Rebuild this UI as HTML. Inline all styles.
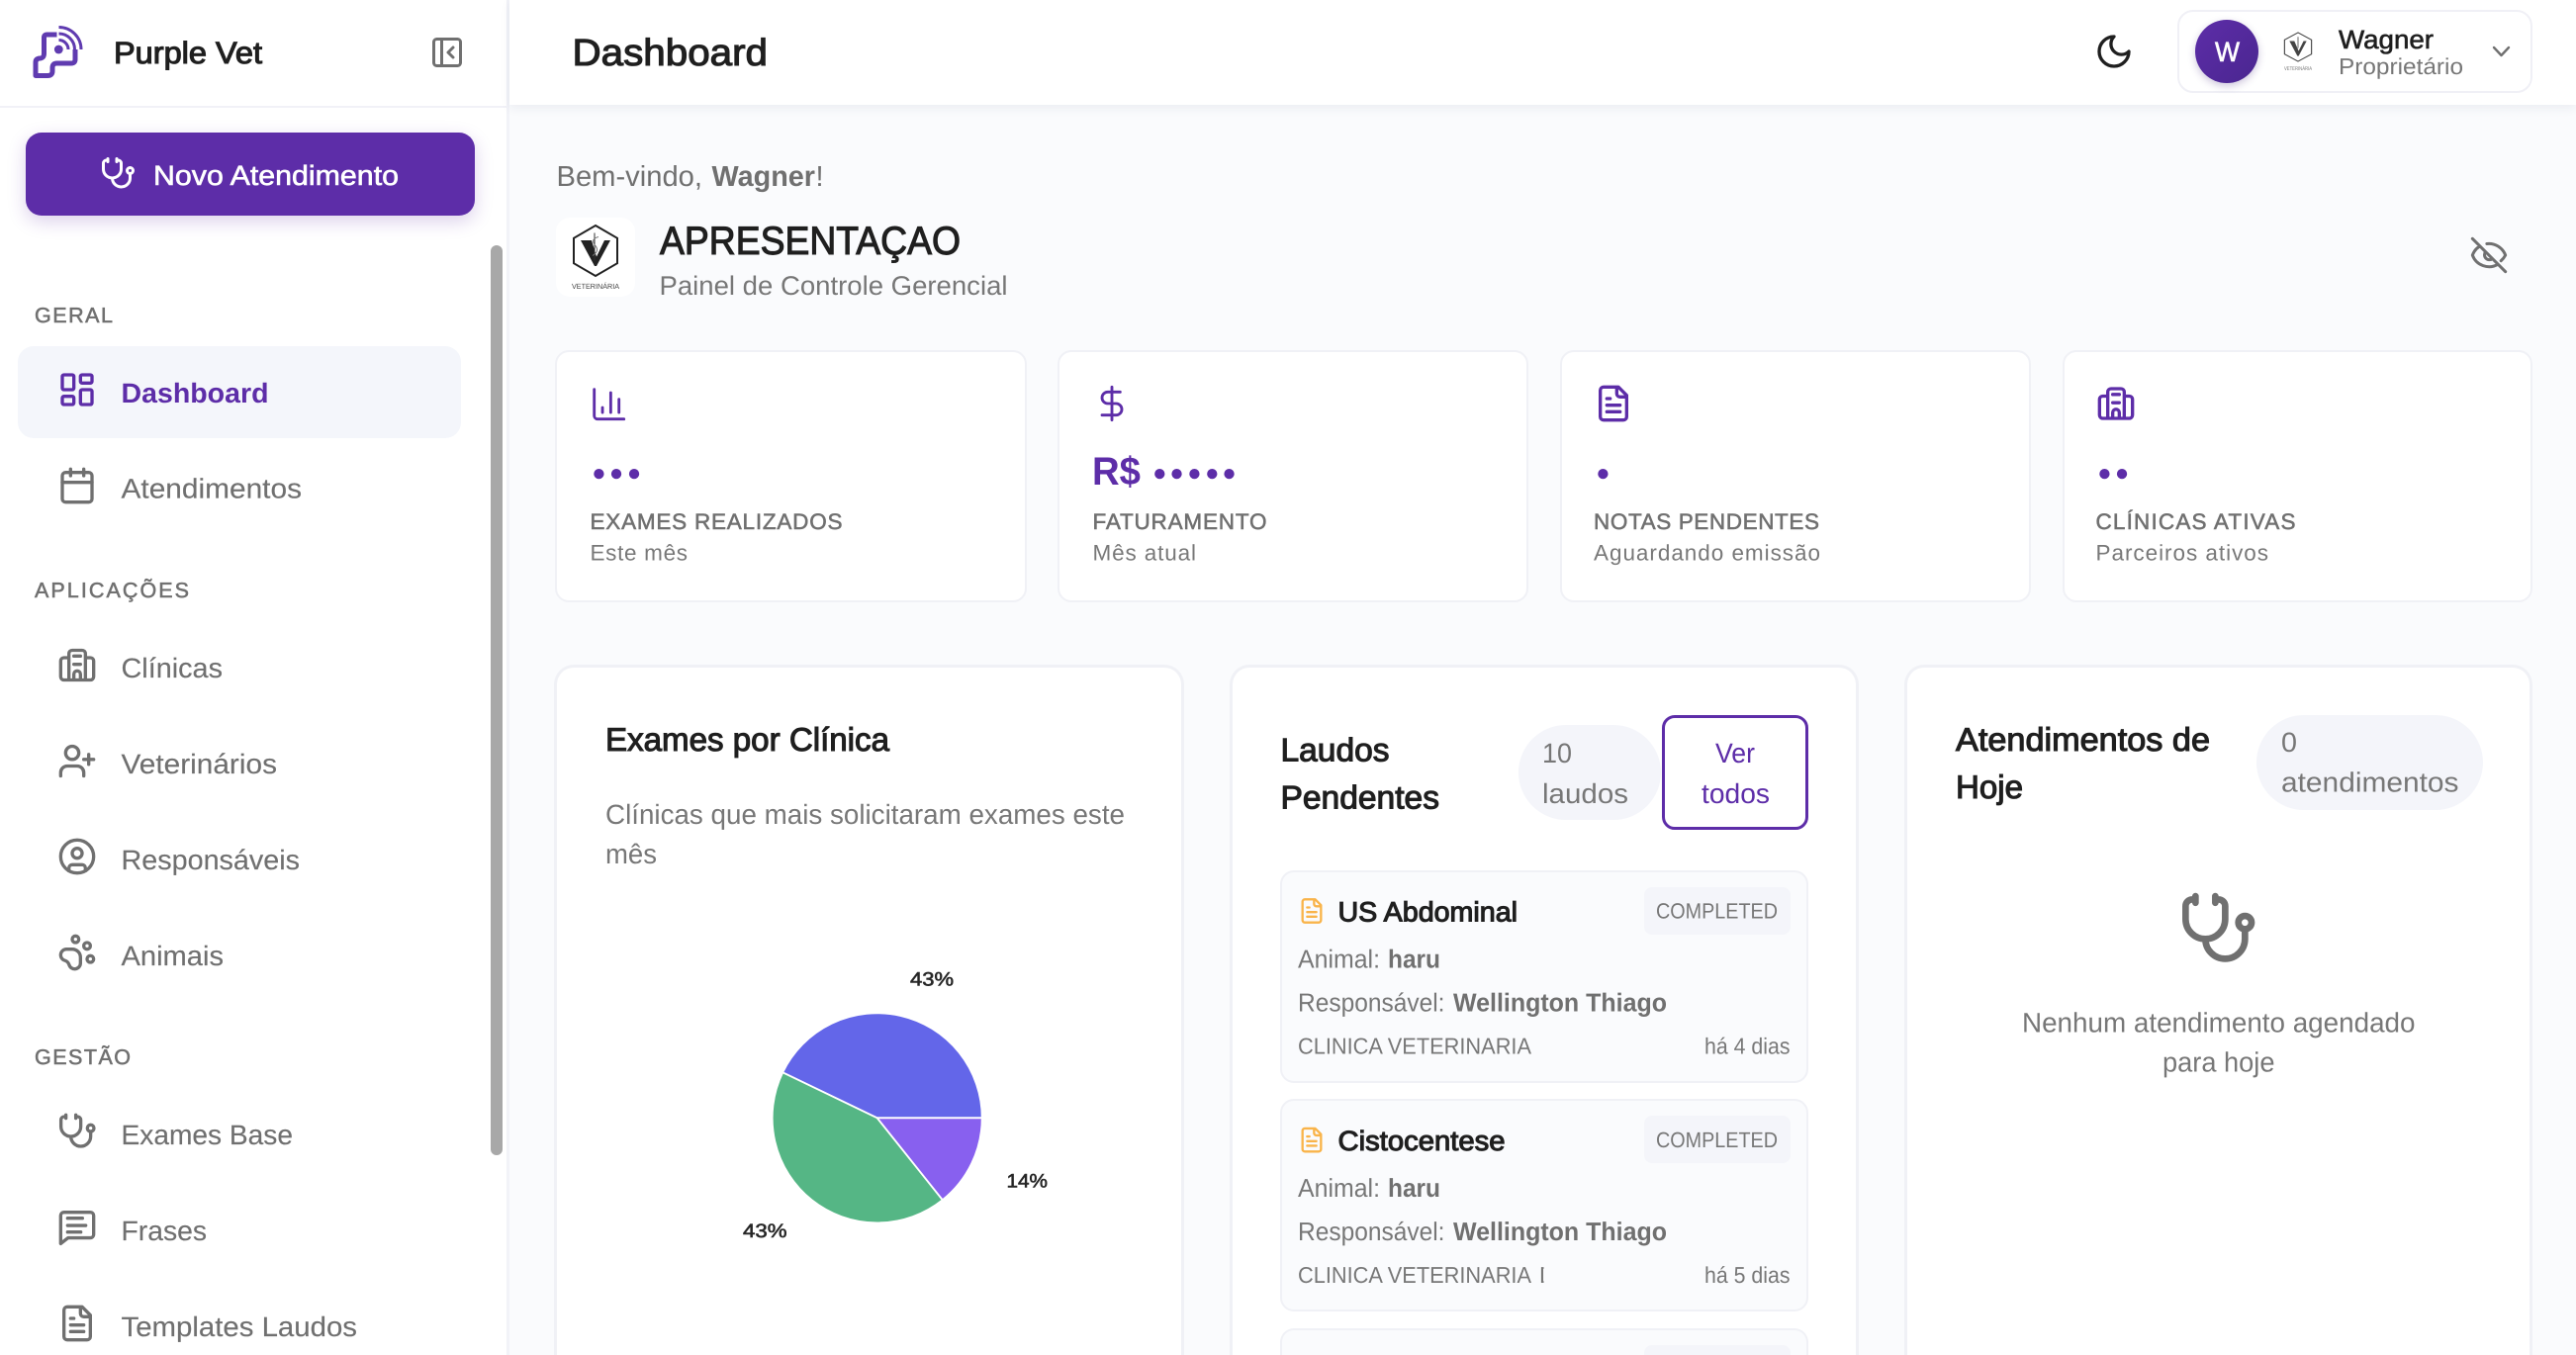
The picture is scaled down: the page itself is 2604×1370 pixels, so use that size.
<!DOCTYPE html>
<html lang="pt-BR">
<head>
<meta charset="utf-8">
<title>Purple Vet - Dashboard</title>
<style>
html,body{margin:0;padding:0;width:2604px;height:1370px;overflow:hidden;background:#fafbfd}
#root{position:relative;width:2604px;height:1370px;overflow:hidden;background:#fafbfd}
.a{position:absolute;box-sizing:border-box}
.side{left:0;top:0;width:512px;height:1370px;background:#fff}
.sideb{left:512px;top:0;width:3px;height:1370px;background:#f2f3f8}
.sline{left:0;top:107px;width:512px;height:2px;background:#f1f1f7}
.top{left:515px;top:0;width:2089px;height:106px;background:#fff;box-shadow:0 3px 10px rgba(30,40,80,.07)}
.btn{left:26px;top:134px;width:454px;height:84px;border-radius:16px;background:#5d2da8;box-shadow:0 6px 18px rgba(94,45,168,.22)}
.act{left:18px;top:350px;width:448px;height:93px;border-radius:16px;background:#f4f6fb}
.scr{left:496px;top:248px;width:12px;height:920px;border-radius:6px;background:#a8a8a8}
.ubox{left:2201px;top:10px;width:359px;height:84px;border:2px solid #f0f0f6;border-radius:16px;background:#fff}
.av{left:2219px;top:20px;width:64px;height:64px;border-radius:50%;background:linear-gradient(135deg,#5d2da8,#4a2690);box-shadow:0 3px 8px rgba(60,30,120,.25)}
.tile{left:562px;top:220px;width:80px;height:80px;border-radius:14px;background:#fff}
.stat{top:354px;width:476px;height:255px;border:2px solid #f0f1f6;border-radius:14px;background:#fff}
.big{top:672px;height:698px;border:3px solid #f0f1f6;border-bottom:0;border-radius:20px 20px 0 0;background:#fff}
.chip{background:#f4f5fa;border-radius:48px}
.ver{left:1680px;top:723px;width:148px;height:116px;border:3px solid #5d2da8;border-radius:13px;background:#fff}
.item{left:1294px;width:534px;height:215px;border:2px solid #f0f1f6;border-radius:14px;background:#fafbfd}
.badge{left:1662px;width:148px;height:48px;border-radius:8px;background:#f4f5fa}
svg.t{position:absolute;left:0;top:0}
text{font-family:"Liberation Sans",sans-serif;text-rendering:geometricPrecision;fill:#707070}
.dk{fill:#1f1f1f}
.pu{fill:#5d2da8}
.wh{fill:#fff}
.m{stroke:currentColor;stroke-width:.6}
.s{stroke:currentColor;stroke-width:1.1}
.lb{font-size:22.500px;stroke:#707070;stroke-width:.55}
.sec{font-size:21.500px;stroke:#707070;stroke-width:.55}
.nav{font-size:28px;stroke:#707070;stroke-width:.15}
.sub{font-size:22.500px;fill:#787878}
.bl{font-size:36px;font-weight:700;fill:#5d2da8}
.i{fill:none;stroke-width:2;stroke-linecap:round;stroke-linejoin:round}
</style>
</head>
<body>
<div id="root">
<div class="a side"></div>
<div class="a sideb"></div>
<div class="a sline"></div>
<div class="a top"></div>
<div class="a btn"></div>
<div class="a act"></div>
<div class="a scr"></div>
<div class="a ubox"></div>
<div class="a av"></div>
<div class="a tile"></div>
<div class="a stat" style="left:561px;width:477px"></div>
<div class="a stat" style="left:1069px;width:476px"></div>
<div class="a stat" style="left:1577px;width:476px"></div>
<div class="a stat" style="left:2085px;width:475px"></div>
<div class="a big" style="left:560px;width:637px"></div>
<div class="a big" style="left:1243px;width:636px"></div>
<div class="a big" style="left:1925px;width:635px"></div>
<div class="a chip" style="left:1535px;top:733px;width:144px;height:96px"></div>
<div class="a ver"></div>
<div class="a item" style="top:880px"></div>
<div class="a item" style="top:1111px"></div>
<div class="a item" style="top:1343px;height:27px;border-bottom:0;border-radius:14px 14px 0 0"></div>
<div class="a badge" style="top:897px"></div>
<div class="a badge" style="top:1128px"></div>
<div class="a badge" style="top:1360px;height:10px;border-radius:8px 8px 0 0"></div>
<div class="a chip" style="left:2281px;top:723px;width:229px;height:96px"></div>

<svg class="t" width="2604" height="1370" viewBox="0 0 2604 1370" xmlns="http://www.w3.org/2000/svg">
<defs><clipPath id="c1"><rect x="1550" y="1270" width="10.500" height="40"/></clipPath></defs>

<!-- logo -->
<g fill="none" stroke="#5f3bb0" stroke-width="5" stroke-linejoin="round">
<path d="M57.5 35H47.5Q44.5 35 44.5 38V54Q44.5 59 40 59Q36 59.500 36 63V76.500H48Q53 76.500 53 72V68.500Q53 64 57.500 64H72Q76 64 76 60V50"/>
</g>
<circle cx="59.300" cy="50" r="4.400" fill="#5f3bb0"/>
<g fill="none" stroke="#5f3bb0" stroke-width="3">
<path d="M59.500 40.500A9.500 9.500 0 0 1 69 50"/>
<path d="M59.500 34A16 16 0 0 1 75.500 50"/>
<path d="M59.500 27.500A22.500 22.500 0 0 1 82 50"/>
</g>
<text class="dk s" style="color:#1f1f1f" x="115" y="64" font-size="31" textLength="150" lengthAdjust="spacingAndGlyphs">Purple Vet</text>

<!-- collapse -->
<rect x="438.500" y="39.500" width="27" height="27" rx="3" fill="none" stroke="#707070" stroke-width="3"/>
<path d="M446.500 40v26" fill="none" stroke="#707070" stroke-width="3"/>
<path d="M458 48l-5 5 5 5" fill="none" stroke="#707070" stroke-width="3" stroke-linecap="round" stroke-linejoin="round"/>

<!-- new button -->
<g class="i" stroke="#fff" transform="translate(101.500 157.500) scale(1.5)">
<path d="M11 2v2M5 2v2M5 3H4a2 2 0 0 0-2 2v4a6 6 0 0 0 12 0V5a2 2 0 0 0-2-2h-1M8 15a6 6 0 0 0 12 0v-3"/><circle cx="20" cy="10" r="2"/>
</g>
<text class="wh m" style="color:#fff" x="155" y="187" font-size="28" textLength="248" lengthAdjust="spacingAndGlyphs">Novo Atendimento</text>

<!-- nav -->
<text class="sec" x="35" y="326" textLength="79" lengthAdjust="spacing">GERAL</text>
<g class="i" stroke="#5d2da8" transform="translate(58 374) scale(1.667)">
<rect x="3" y="3" width="7" height="9" rx="1"/><rect x="14" y="3" width="7" height="5" rx="1"/><rect x="14" y="12" width="7" height="9" rx="1"/><rect x="3" y="16" width="7" height="5" rx="1"/>
</g>
<text class="pu" font-size="28" font-weight="700" x="122.500" y="407" textLength="149" lengthAdjust="spacingAndGlyphs">Dashboard</text>

<g class="i" stroke="#707070" transform="translate(58 471) scale(1.667)">
<path d="M8 2v4M16 2v4"/><rect x="3" y="4" width="18" height="18" rx="2"/><path d="M3 10h18"/>
</g>
<text class="nav" x="122.500" y="503.500" textLength="182.500" lengthAdjust="spacingAndGlyphs">Atendimentos</text>

<text class="sec" x="35" y="604" textLength="156" lengthAdjust="spacing">APLICAÇÕES</text>

<g class="i" stroke="#707070" transform="translate(58 652.500) scale(1.667)">
<path d="M7 21V5a2 2 0 0 1 2-2h6a2 2 0 0 1 2 2v16ZM7 7.500H4a2 2 0 0 0-2 2V19a2 2 0 0 0 2 2h16a2 2 0 0 0 2-2V9.500a2 2 0 0 0-2-2h-3M10 6.500h4M10 11.500h4M10 21v-3.500a2 2 0 0 1 4 0V21"/>
</g>
<text class="nav" x="122.500" y="685" textLength="102.500" lengthAdjust="spacingAndGlyphs">Clínicas</text>

<g class="i" stroke="#707070" transform="translate(58 749.500) scale(1.667)">
<path d="M16 21v-2a4 4 0 0 0-4-4H6a4 4 0 0 0-4 4v2"/><circle cx="9" cy="7" r="4"/><path d="M19 8v6M22 11h-6"/>
</g>
<text class="nav" x="122.500" y="782" textLength="157.500" lengthAdjust="spacingAndGlyphs">Veterinários</text>

<g class="i" stroke="#707070" transform="translate(58 846) scale(1.667)">
<circle cx="12" cy="12" r="10"/><circle cx="12" cy="10" r="3"/><path d="M7 20.662V19a2 2 0 0 1 2-2h6a2 2 0 0 1 2 2v1.662"/>
</g>
<text class="nav" x="122.500" y="879" textLength="180.500" lengthAdjust="spacingAndGlyphs">Responsáveis</text>

<g class="i" stroke="#707070" transform="translate(58 943) scale(1.667)">
<circle cx="11" cy="4" r="2"/><circle cx="18" cy="8" r="2"/><circle cx="20" cy="16" r="2"/><path d="M9 10a5 5 0 0 1 5 5v3.500a3.500 3.500 0 0 1-6.840 1.045Q6.520 17.480 4.460 16.840A3.500 3.500 0 0 1 5.500 10Z"/>
</g>
<text class="nav" x="122.500" y="976" textLength="103.500" lengthAdjust="spacingAndGlyphs">Animais</text>

<text class="sec" x="35" y="1076" textLength="97" lengthAdjust="spacing">GESTÃO</text>

<g class="i" stroke="#707070" transform="translate(58.300 1124) scale(1.667)">
<path d="M11 2v2M5 2v2M5 3H4a2 2 0 0 0-2 2v4a6 6 0 0 0 12 0V5a2 2 0 0 0-2-2h-1M8 15a6 6 0 0 0 12 0v-3"/><circle cx="20" cy="10" r="2"/>
</g>
<text class="nav" x="122.500" y="1157" textLength="173.500" lengthAdjust="spacingAndGlyphs">Exames Base</text>

<g class="i" stroke="#707070" transform="translate(58 1220.700) scale(1.667)">
<path d="M22 16.500a2 2 0 0 1-2 2H6.500L2 22V5a2 2 0 0 1 2-2h16a2 2 0 0 1 2 2zM6.200 6.600h9M6.200 11h11M6.200 15h8"/>
</g>
<text class="nav" x="122.500" y="1254" textLength="86.500" lengthAdjust="spacingAndGlyphs">Frases</text>

<g class="i" stroke="#707070" transform="translate(58 1318) scale(1.667)">
<path d="M15 2H6a2 2 0 0 0-2 2v16a2 2 0 0 0 2 2h12a2 2 0 0 0 2-2V7ZM14 2v4a2 2 0 0 0 2 2h4M10 9H8M16 13H8M16 17H8"/>
</g>
<text class="nav" x="122.500" y="1351" textLength="238.500" lengthAdjust="spacingAndGlyphs">Templates Laudos</text>

<!-- top bar -->
<text class="dk s" style="color:#1f1f1f" x="578.500" y="66" font-size="38" textLength="197.500" lengthAdjust="spacingAndGlyphs">Dashboard</text>
<g class="i" stroke="#1f1f1f" transform="translate(2117 32) scale(1.667)">
<path d="M12 3a6 6 0 0 0 9 9 9 9 0 1 1-9-9Z"/>
</g>
<text class="wh m" style="color:#fff" x="2239" y="62" font-size="28" textLength="25" lengthAdjust="spacingAndGlyphs">W</text>

<!-- small logo -->
<g transform="translate(2323 47.500) scale(.62 .57)">
<path d="M0-25.500L22-12.700V12.700L0 25.500L-22 12.700V-12.700Z" fill="none" stroke="#444" stroke-width="1.800"/>
<path d="M-14-10.500H-6L1 7L9-10.500H14L1 16H-1Z" fill="#444"/>
<path d="M0-18V2" stroke="#444" stroke-width="1.300" fill="none"/>
</g>
<text x="2309" y="71" font-size="5.500" style="fill:#777" textLength="28" lengthAdjust="spacingAndGlyphs">VETERINÁRIA</text>

<text class="dk m" style="color:#1f1f1f" x="2364" y="49" font-size="26.500" textLength="96" lengthAdjust="spacingAndGlyphs">Wagner</text>
<text x="2364" y="75" font-size="23" style="fill:#777" textLength="126" lengthAdjust="spacingAndGlyphs">Proprietário</text>
<path d="M2521 48l7.500 8 7.500-8" fill="none" stroke="#707070" stroke-width="2.400" stroke-linecap="round" stroke-linejoin="round"/>

<!-- welcome -->
<text x="562.500" y="188" font-size="29" textLength="147.500" lengthAdjust="spacingAndGlyphs">Bem-vindo,</text>
<text font-weight="700" x="719.500" y="188" font-size="29" textLength="104.500" lengthAdjust="spacingAndGlyphs">Wagner</text>
<text x="824.500" y="188" font-size="29">!</text>

<!-- large logo -->
<g transform="translate(602 253.500)">
<path d="M0-25.500L22-12.700V12.700L0 25.500L-22 12.700V-12.700Z" fill="none" stroke="#222" stroke-width="2"/>
<path d="M-15-10.500H-4L1 6L9-10.500H15L1 15.500H-1Z" fill="#222"/>
<path d="M-1-18V10" stroke="#333" stroke-width="1" fill="none"/>
<path d="M3-14Q-5-12 -1-6Q5 0 -3 5" stroke="#777" stroke-width="1" fill="none"/>
</g>
<text x="578" y="292" font-size="7.500" style="fill:#444" textLength="48" lengthAdjust="spacingAndGlyphs">VETERINÁRIA</text>

<text class="dk s" style="color:#1f1f1f" x="667" y="257" font-size="40" textLength="304" lengthAdjust="spacingAndGlyphs">APRESENTAÇAO</text>
<text x="666.500" y="298" font-size="27" style="fill:#777" textLength="352" lengthAdjust="spacingAndGlyphs">Painel de Controle Gerencial</text>

<g class="i" stroke="#707070" transform="translate(2496 238) scale(1.667)" style="stroke-width:1.800">
<path d="M10.700 5.100A10.700 10.700 0 0 1 22 12a11 11 0 0 1-2.700 3.400M14.100 14.200a3 3 0 0 1-4.200-4.200M17.500 17.500A10.700 10.700 0 0 1 2 12a11 11 0 0 1 4.500-5.500M2 2l20 20"/>
</g>

<!-- stat cards -->
<g class="i" stroke="#5d2da8" transform="translate(595.700 388.700) scale(1.667)" style="stroke-width:1.700">
<path d="M3 3v16a2 2 0 0 0 2 2h16M18 17V9M13 17V5M8 17v-3"/>
</g>
<text class="bl" x="599.100 616.700 634.700" y="491">•••</text>
<text class="lb" x="596.500" y="535" textLength="255" lengthAdjust="spacing">EXAMES REALIZADOS</text>
<text class="sub" x="596.500" y="566.700" textLength="98.500" lengthAdjust="spacing">Este mês</text>

<g class="i" stroke="#5d2da8" transform="translate(1104 388) scale(1.667)" style="stroke-width:1.700">
<path d="M12 2v20M17 5H9.500a3.500 3.500 0 0 0 0 7h5a3.500 3.500 0 0 1 0 7H6"/>
</g>
<text class="pu" font-weight="700" x="1104" y="490" font-size="40" textLength="49" lengthAdjust="spacingAndGlyphs">R$</text>
<text class="bl" x="1166 1183.200 1201.100 1219 1236.200" y="491">•••••</text>
<text class="lb" x="1104.500" y="535" textLength="176" lengthAdjust="spacing">FATURAMENTO</text>
<text class="sub" x="1104.500" y="566.700" textLength="104.500" lengthAdjust="spacing">Mês atual</text>

<g class="i" stroke="#5d2da8" transform="translate(1611 388) scale(1.667)">
<path d="M15 2H6a2 2 0 0 0-2 2v16a2 2 0 0 0 2 2h12a2 2 0 0 0 2-2V7ZM14 2v4a2 2 0 0 0 2 2h4M10 9H8M16 13H8M16 17H8"/>
</g>
<text class="bl" x="1614.100" y="491">•</text>
<text class="lb" x="1611" y="535" textLength="228" lengthAdjust="spacing">NOTAS PENDENTES</text>
<text class="sub" x="1611" y="566.700" textLength="229" lengthAdjust="spacing">Aguardando emissão</text>

<g class="i" stroke="#5d2da8" transform="translate(2119 388) scale(1.667)">
<path d="M7 21V5a2 2 0 0 1 2-2h6a2 2 0 0 1 2 2v16ZM7 7.500H4a2 2 0 0 0-2 2V19a2 2 0 0 0 2 2h16a2 2 0 0 0 2-2V9.500a2 2 0 0 0-2-2h-3M10 6.500h4M10 11.500h4M10 21v-3.500a2 2 0 0 1 4 0V21"/>
</g>
<text class="bl" x="2121.100 2138.700" y="491">••</text>
<text class="lb" x="2118.500" y="535" textLength="202" lengthAdjust="spacing">CLÍNICAS ATIVAS</text>
<text class="sub" x="2118.500" y="566.700" textLength="174.500" lengthAdjust="spacing">Parceiros ativos</text>

<!-- card 1 -->
<text class="dk s" style="color:#1f1f1f" x="612" y="759" font-size="33" textLength="287" lengthAdjust="spacingAndGlyphs">Exames por Clínica</text>
<text x="612" y="833" font-size="28" style="fill:#777" textLength="525" lengthAdjust="spacingAndGlyphs">Clínicas que mais solicitaram exames este</text>
<text x="612" y="873" font-size="28" style="fill:#777" textLength="52" lengthAdjust="spacingAndGlyphs">mês</text>

<g stroke="#fff" stroke-width="1.800" stroke-linejoin="round">
<path d="M886.700 1130.300H992.700A106 106 0 0 0 791.200 1084.300Z" fill="#6366e9"/>
<path d="M886.700 1130.300L791.200 1084.300A106 106 0 0 0 952.800 1213.200Z" fill="#55b685"/>
<path d="M886.700 1130.300L952.800 1213.200A106 106 0 0 0 992.700 1130.300Z" fill="#8860ef"/>
</g>
<text class="m" style="fill:#262626;color:#262626" x="920" y="996.700" font-size="19.500" textLength="44" lengthAdjust="spacingAndGlyphs">43%</text>
<text class="m" style="fill:#262626;color:#262626" x="1017.500" y="1200.700" font-size="19.500" textLength="41.500" lengthAdjust="spacingAndGlyphs">14%</text>
<text class="m" style="fill:#262626;color:#262626" x="751" y="1251" font-size="19.500" textLength="44.500" lengthAdjust="spacingAndGlyphs">43%</text>

<!-- card 2 -->
<text class="dk s" style="color:#1f1f1f" x="1294.500" y="769.500" font-size="33" textLength="110" lengthAdjust="spacingAndGlyphs">Laudos</text>
<text class="dk s" style="color:#1f1f1f" x="1294.500" y="817.500" font-size="33" textLength="160.500" lengthAdjust="spacingAndGlyphs">Pendentes</text>
<text x="1559" y="771" font-size="28" style="fill:#777" textLength="30" lengthAdjust="spacingAndGlyphs">10</text>
<text x="1559" y="812" font-size="28" style="fill:#777" textLength="87" lengthAdjust="spacingAndGlyphs">laudos</text>
<text class="pu" x="1734" y="771" font-size="28" textLength="40" lengthAdjust="spacingAndGlyphs">Ver</text>
<text class="pu" x="1720" y="812" font-size="28" textLength="69" lengthAdjust="spacingAndGlyphs">todos</text>

<g class="i" stroke="#f9b44a" transform="translate(1312 907) scale(1.167)">
<path d="M15 2H6a2 2 0 0 0-2 2v16a2 2 0 0 0 2 2h12a2 2 0 0 0 2-2V7ZM14 2v4a2 2 0 0 0 2 2h4M10 9H8M16 13H8M16 17H8"/>
</g>
<text class="dk s" style="color:#1f1f1f" x="1352.500" y="931.500" font-size="28" textLength="181.500" lengthAdjust="spacingAndGlyphs">US Abdominal</text>
<text x="1674" y="928.500" font-size="22" style="fill:#777" textLength="123" lengthAdjust="spacingAndGlyphs">COMPLETED</text>
<text x="1312" y="978.500" font-size="26" style="fill:#777" textLength="83" lengthAdjust="spacingAndGlyphs">Animal:</text>
<text font-weight="700" x="1403" y="978.500" font-size="26" textLength="53" lengthAdjust="spacingAndGlyphs">haru</text>
<text x="1312" y="1022.500" font-size="26" style="fill:#777" textLength="148.500" lengthAdjust="spacingAndGlyphs">Responsável:</text>
<text font-weight="700" x="1469" y="1022.500" font-size="26" textLength="216" lengthAdjust="spacingAndGlyphs">Wellington Thiago</text>
<text x="1312" y="1065.500" font-size="23" style="fill:#777" textLength="236" lengthAdjust="spacingAndGlyphs">CLINICA VETERINARIA</text>
<text x="1723" y="1065.500" font-size="23" style="fill:#777" textLength="86.500" lengthAdjust="spacingAndGlyphs">há 4 dias</text>

<g class="i" stroke="#f9b44a" transform="translate(1312 1138.600) scale(1.167)">
<path d="M15 2H6a2 2 0 0 0-2 2v16a2 2 0 0 0 2 2h12a2 2 0 0 0 2-2V7ZM14 2v4a2 2 0 0 0 2 2h4M10 9H8M16 13H8M16 17H8"/>
</g>
<text class="dk s" style="color:#1f1f1f" x="1352.500" y="1163" font-size="28" textLength="169" lengthAdjust="spacingAndGlyphs">Cistocentese</text>
<text x="1674" y="1160" font-size="22" style="fill:#777" textLength="123" lengthAdjust="spacingAndGlyphs">COMPLETED</text>
<text x="1312" y="1210" font-size="26" style="fill:#777" textLength="83" lengthAdjust="spacingAndGlyphs">Animal:</text>
<text font-weight="700" x="1403" y="1210" font-size="26" textLength="53" lengthAdjust="spacingAndGlyphs">haru</text>
<text x="1312" y="1254" font-size="26" style="fill:#777" textLength="148.500" lengthAdjust="spacingAndGlyphs">Responsável:</text>
<text font-weight="700" x="1469" y="1254" font-size="26" textLength="216" lengthAdjust="spacingAndGlyphs">Wellington Thiago</text>
<text x="1312" y="1297" font-size="23" style="fill:#777" textLength="236" lengthAdjust="spacingAndGlyphs">CLINICA VETERINARIA</text>
<text clip-path="url(#c1)" x="1556" y="1297" font-size="23" style="fill:#777">D</text>
<text x="1723" y="1297" font-size="23" style="fill:#777" textLength="86.500" lengthAdjust="spacingAndGlyphs">há 5 dias</text>

<!-- card 3 -->
<text class="dk s" style="color:#1f1f1f" x="1977" y="759" font-size="33" textLength="257" lengthAdjust="spacingAndGlyphs">Atendimentos de</text>
<text class="dk s" style="color:#1f1f1f" x="1977" y="807" font-size="33" textLength="68" lengthAdjust="spacingAndGlyphs">Hoje</text>
<text x="2306" y="760" font-size="28" style="fill:#777" textLength="16" lengthAdjust="spacingAndGlyphs">0</text>
<text x="2306" y="800.500" font-size="28" style="fill:#777" textLength="179.500" lengthAdjust="spacingAndGlyphs">atendimentos</text>
<g class="i" stroke="#707070" transform="translate(2202.700 899.400) scale(3.333)">
<path d="M11 2v2M5 2v2M5 3H4a2 2 0 0 0-2 2v4a6 6 0 0 0 12 0V5a2 2 0 0 0-2-2h-1M8 15a6 6 0 0 0 12 0v-3"/><circle cx="20" cy="10" r="2"/>
</g>
<text x="2044" y="1043.500" font-size="28" style="fill:#777" textLength="397.500" lengthAdjust="spacingAndGlyphs">Nenhum atendimento agendado</text>
<text x="2186" y="1083.500" font-size="28" style="fill:#777" textLength="113.500" lengthAdjust="spacingAndGlyphs">para hoje</text>
</svg>
</div>
</body>
</html>
